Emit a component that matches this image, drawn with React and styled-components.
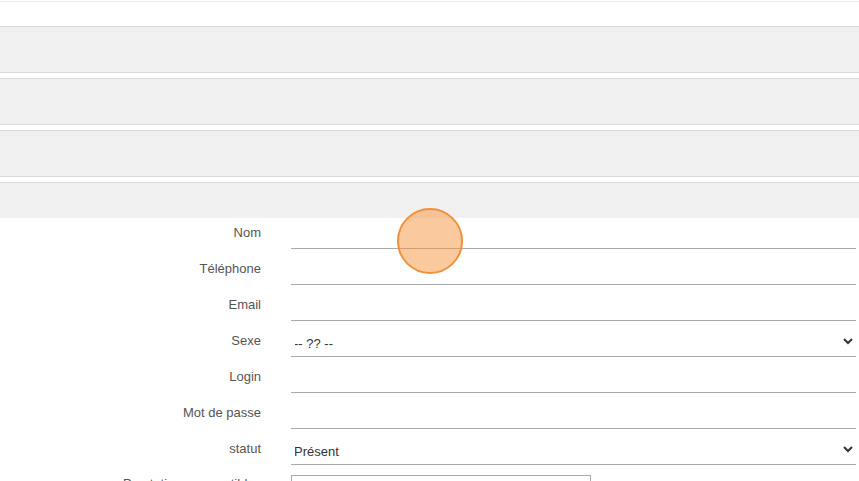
import React from 'react';
import styled, { createGlobalStyle } from 'styled-components';

const GlobalStyle = createGlobalStyle`
  html, body {
    margin: 0;
    padding: 0;
    background: #fff;
    font-family: "Liberation Sans", Arial, sans-serif;
    overflow: hidden;
  }
`;

const Page = styled.div`
  position: relative;
  width: 859px;
  height: 481px;
  overflow: hidden;
`;

const TopBar = styled.div`
  height: 1px;
  border-bottom: 1px solid #ececec;
  margin-bottom: 24px;
`;

const Panels = styled.div`
  display: flex;
  flex-direction: column;
  gap: 5px;
`;

const Panel = styled.div`
  background: #f0f0f0;
  border-top: 1px solid #dadada;
  border-bottom: ${p => (p.$open ? 'none' : '1px solid #dadada')};
  height: ${p => (p.$open ? '35px' : '45px')};
`;

const Form = styled.form`
  display: flex;
  flex-direction: column;
  padding-right: 3px;
`;

const Row = styled.div`
  display: grid;
  grid-template-columns: 261px 1fr;
  column-gap: 30px;
  align-items: ${p => (p.$top ? 'start' : 'center')};
  margin-bottom: 5px;
`;

const Label = styled.label`
  text-align: right;
  font-size: 13px;
  color: #555;
  white-space: nowrap;
  padding-top: ${p => (p.$top ? '6px' : '0')};
  padding-bottom: ${p => (p.$top ? '0' : '2px')};
`;

const Input = styled.input`
  box-sizing: border-box;
  height: 31px;
  width: 100%;
  border: none;
  border-bottom: 1px solid #aaa;
  padding: 0 4px;
  font-family: inherit;
  font-size: 13px;
  color: #333;
  background: transparent;
  outline: none;
`;

const Select = styled.select`
  box-sizing: border-box;
  height: 31px;
  width: 100%;
  border: none;
  border-bottom: 1px solid #aaa;
  border-radius: 0;
  padding: 4px 0 0 0;
  text-indent: -1px;
  font-family: inherit;
  font-size: 13px;
  color: #333;
  background: transparent;
  outline: none;
`;

const ListBox = styled.div`
  box-sizing: border-box;
  margin-top: 5px;
  width: 300px;
  height: 80px;
  border: 1px solid #aaa;
`;

const ClickMark = styled.div`
  position: absolute;
  left: 397px;
  top: 208px;
  width: 62px;
  height: 62px;
  border-radius: 50%;
  border: 2px solid #f0913a;
  background: rgba(247, 148, 62, 0.5);
  pointer-events: none;
`;

const fields = [
  { label: 'Nom', type: 'text' },
  { label: 'Téléphone', type: 'text' },
  { label: 'Email', type: 'text' },
  { label: 'Sexe', options: ['-- ?? --', 'Homme', 'Femme'] },
  { label: 'Login', type: 'text' },
  { label: 'Mot de passe', type: 'password' },
  { label: 'statut', options: ['Présent', 'Absent'] },
];

export default function App() {
  return (
    <>
      <GlobalStyle />
      <Page>
        <TopBar />
        <Panels>
          <Panel />
          <Panel />
          <Panel />
          <Panel $open />
        </Panels>
        <Form>
          {fields.map(f => (
            <Row key={f.label}>
              <Label>{f.label}</Label>
              {f.options ? (
                <Select defaultValue={f.options[0]}>
                  {f.options.map(o => (
                    <option key={o}>{o}</option>
                  ))}
                </Select>
              ) : (
                <Input type={f.type} />
              )}
            </Row>
          ))}
          <Row $top>
            <Label $top>Prestations compatibles</Label>
            <ListBox />
          </Row>
        </Form>
        <ClickMark />
      </Page>
    </>
  );
}
